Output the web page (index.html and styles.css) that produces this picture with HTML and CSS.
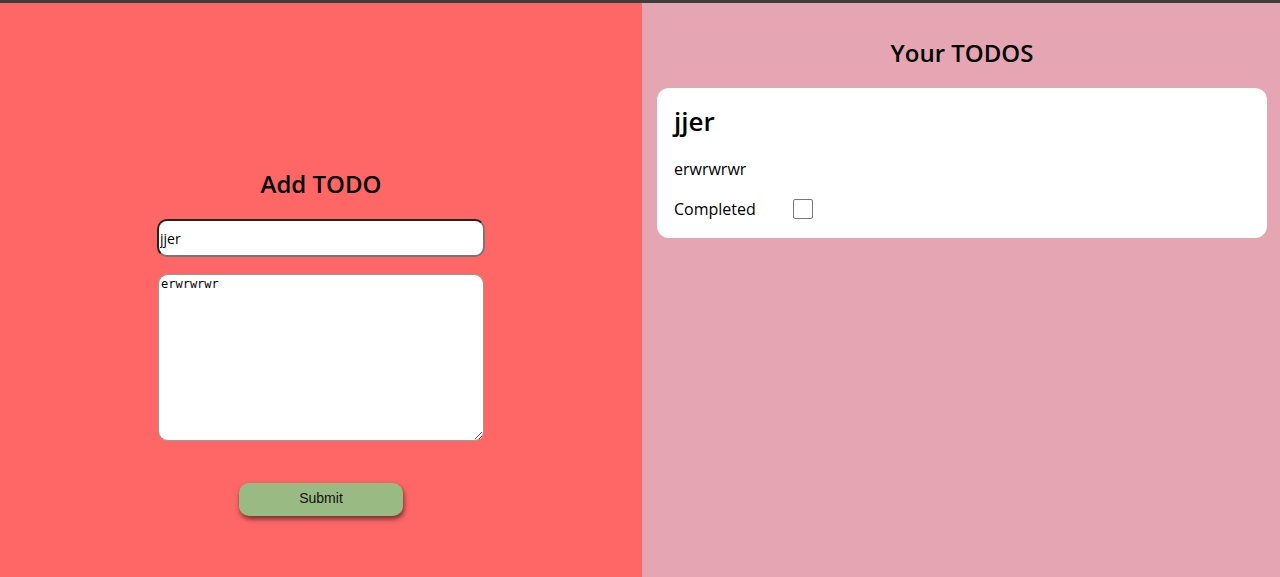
FILE: index.html
```html
<!DOCTYPE html>
<html>
<head>
<meta charset="utf-8">
<link rel="stylesheet" href="styles.css">
</head>
<body>
<div class="topbar"></div>
<main class="app">
  <section class="add">
    <h2 class="heading add-heading">Add TODO</h2>
    <form class="form">
      <input class="title-input" type="text" value="jjer">
      <textarea class="desc-input">erwrwrwr</textarea>
      <button class="submit" type="button">Submit</button>
    </form>
  </section>
  <section class="list">
    <h2 class="heading list-heading">Your TODOS</h2>
    <div class="card">
      <h3 class="card-title">jjer</h3>
      <p class="card-desc">erwrwrwr</p>
      <label class="card-status">Completed <span class="box"></span></label>
    </div>
  </section>
</main>
</body>
</html>
```
FILE: styles.css
```css
* { box-sizing: border-box; }
html, body { margin: 0; padding: 0; height: 100%; }
body {
  font-family: "Open Sans", "Lato", sans-serif;
  display: flex;
  flex-direction: column;
  background: #ff6767;
}
.topbar { height: 3px; background: #3d3d3d; flex: none; }
.app { flex: 1; display: flex; }
.add {
  width: 642px;
  background: #ff6767;
  display: flex;
  flex-direction: column;
  align-items: center;
  padding-top: 165px;
}
.heading {
  margin: 0;
  font-weight: 600;
  font-size: 24px;
  line-height: 32px;
  color: #000;
}
.form {
  display: flex;
  flex-direction: column;
  align-items: center;
  margin-top: 19px;
}
.title-input {
  width: 328px;
  height: 38px;
  border: 2px solid #222;
  border-bottom-color: #777;
  border-right-color: #777;
  border-radius: 10px;
  padding: 0 1px;
  font-family: "Open Sans", sans-serif;
  font-size: 14px;
  background: #fff;
  color: #000;
}
.desc-input {
  margin-top: 17px;
  width: 326px;
  height: 167px;
  border: 1px solid #999;
  border-radius: 10px;
  padding: 2px 2px;
  font-family: "DejaVu Sans Mono", monospace;
  font-size: 12px;
  background: #fff;
  color: #000;
  resize: both;
}
.submit {
  margin-top: 42px;
  width: 164px;
  height: 33px;
  padding: 0 0 3px;
  background: #9aba84;
  border: none;
  border-radius: 10px;
  box-shadow: 1px 3px 5px rgba(60, 20, 20, 0.7);
  font-family: "Liberation Sans", Arial, sans-serif;
  font-size: 14px;
  color: #111;
}
.list {
  flex: 1;
  background: #e5a5b3;
  display: flex;
  flex-direction: column;
  align-items: center;
  padding: 34px 13px 0 15px;
}
.card {
  margin-top: 19px;
  align-self: stretch;
  background: #fff;
  border-radius: 12px;
  padding: 17px 17px 18px;
}
.card-title {
  margin: 0;
  font-size: 26px;
  font-weight: 600;
  line-height: 32px;
}
.card-desc {
  margin: 21px 0 0;
  font-size: 16px;
  line-height: 22px;
}
.card-status {
  display: flex;
  align-items: center;
  gap: 37px;
  margin-top: 18px;
  font-size: 16px;
  line-height: 22px;
}
.box {
  width: 20px;
  height: 20px;
  border: 1px solid #777;
  border-radius: 2px;
  background: #fff;
}
```
